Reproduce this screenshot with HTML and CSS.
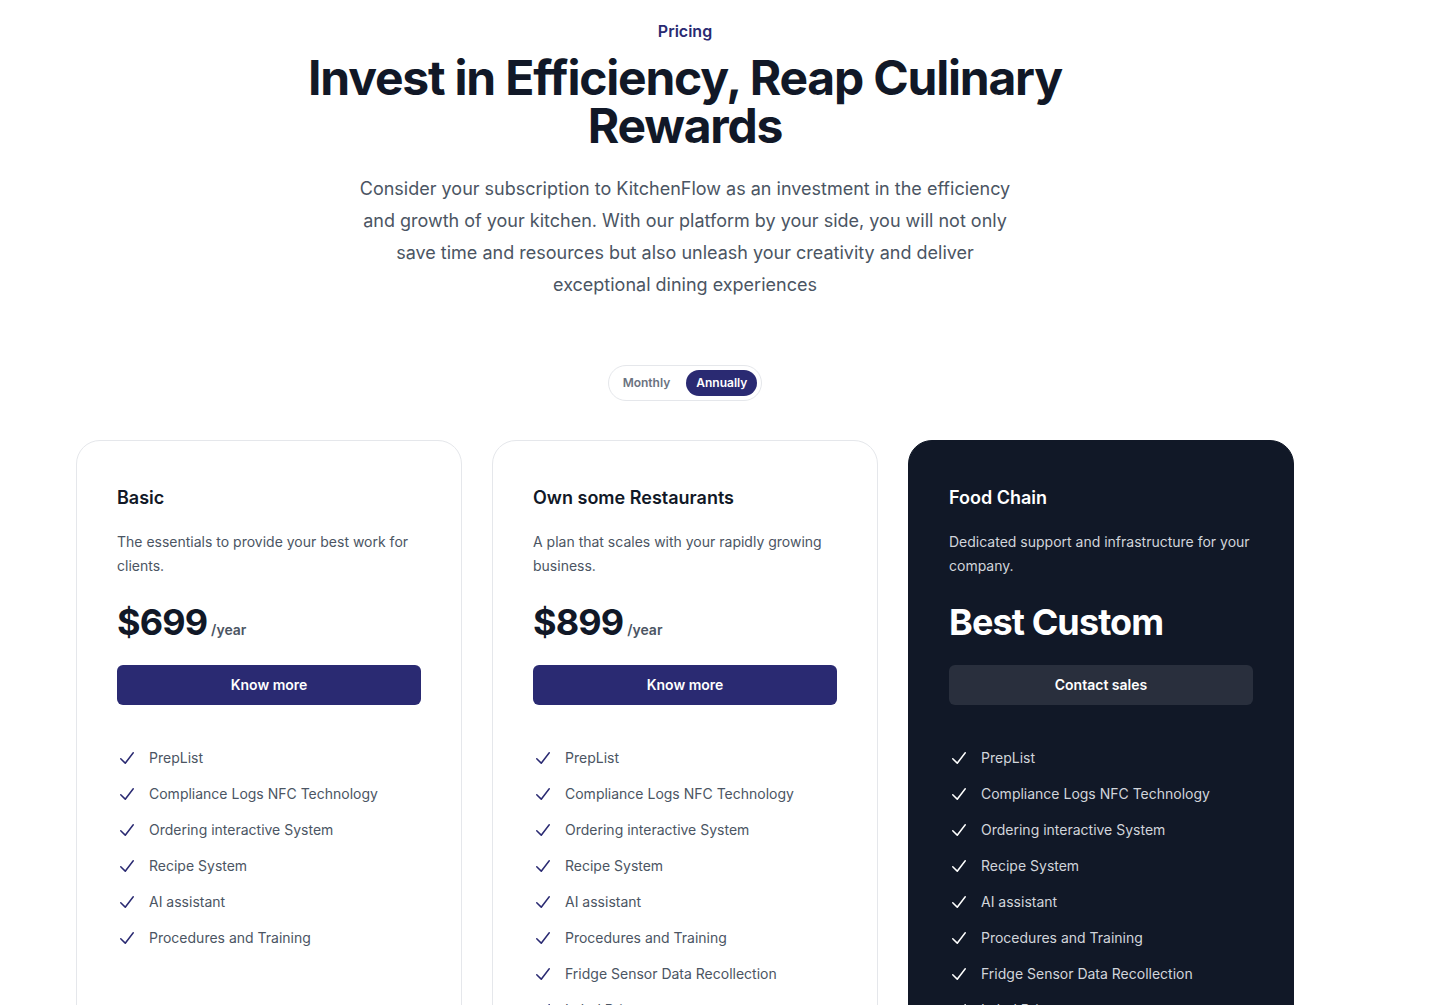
FILE: index.html
```html
<!DOCTYPE html>
<html lang="en">
<head>
<meta charset="utf-8">
<title>Pricing</title>
<link rel="stylesheet" href="styles.css">
</head>
<body>
<main class="page">
  <header class="intro">
    <p class="eyebrow">Pricing</p>
    <h1 class="title">Invest in Efficiency, Reap Culinary Rewards</h1>
    <p class="lead">Consider your subscription to KitchenFlow as an investment in the efficiency and growth of your kitchen. With our platform by your side, you will not only save time and resources but also unleash your creativity and deliver exceptional dining experiences</p>
  </header>

  <div class="toggle-wrap">
    <div class="toggle">
      <span class="toggle-opt">Monthly</span>
      <span class="toggle-opt active">Annually</span>
    </div>
  </div>

  <section class="cards">
    <article class="card">
      <h3 class="card-title">Basic</h3>
      <p class="card-desc">The essentials to provide your best work for clients.</p>
      <p class="price"><span class="amount">$699</span><span class="per">/year</span></p>
      <a class="btn" href="#">Know more</a>
      <ul class="features">
        <li><svg class="check" viewBox="0 0 20 20" aria-hidden="true"><path fill-rule="evenodd" d="M16.704 4.153a.75.75 0 01.143 1.052l-8 10.5a.75.75 0 01-1.127.075l-4.5-4.5a.75.75 0 011.06-1.06l3.894 3.893 7.48-9.817a.75.75 0 011.05-.143z" clip-rule="evenodd"/></svg>PrepList</li>
        <li><svg class="check" viewBox="0 0 20 20" aria-hidden="true"><path fill-rule="evenodd" d="M16.704 4.153a.75.75 0 01.143 1.052l-8 10.5a.75.75 0 01-1.127.075l-4.5-4.5a.75.75 0 011.06-1.06l3.894 3.893 7.48-9.817a.75.75 0 011.05-.143z" clip-rule="evenodd"/></svg>Compliance Logs NFC Technology</li>
        <li><svg class="check" viewBox="0 0 20 20" aria-hidden="true"><path fill-rule="evenodd" d="M16.704 4.153a.75.75 0 01.143 1.052l-8 10.5a.75.75 0 01-1.127.075l-4.5-4.5a.75.75 0 011.06-1.06l3.894 3.893 7.48-9.817a.75.75 0 011.05-.143z" clip-rule="evenodd"/></svg>Ordering interactive System</li>
        <li><svg class="check" viewBox="0 0 20 20" aria-hidden="true"><path fill-rule="evenodd" d="M16.704 4.153a.75.75 0 01.143 1.052l-8 10.5a.75.75 0 01-1.127.075l-4.5-4.5a.75.75 0 011.06-1.06l3.894 3.893 7.48-9.817a.75.75 0 011.05-.143z" clip-rule="evenodd"/></svg>Recipe System</li>
        <li><svg class="check" viewBox="0 0 20 20" aria-hidden="true"><path fill-rule="evenodd" d="M16.704 4.153a.75.75 0 01.143 1.052l-8 10.5a.75.75 0 01-1.127.075l-4.5-4.5a.75.75 0 011.06-1.06l3.894 3.893 7.48-9.817a.75.75 0 011.05-.143z" clip-rule="evenodd"/></svg>AI assistant</li>
        <li><svg class="check" viewBox="0 0 20 20" aria-hidden="true"><path fill-rule="evenodd" d="M16.704 4.153a.75.75 0 01.143 1.052l-8 10.5a.75.75 0 01-1.127.075l-4.5-4.5a.75.75 0 011.06-1.06l3.894 3.893 7.48-9.817a.75.75 0 011.05-.143z" clip-rule="evenodd"/></svg>Procedures and Training</li>
      </ul>
    </article>

    <article class="card">
      <h3 class="card-title">Own some Restaurants</h3>
      <p class="card-desc">A plan that scales with your rapidly growing business.</p>
      <p class="price"><span class="amount">$899</span><span class="per">/year</span></p>
      <a class="btn" href="#">Know more</a>
      <ul class="features">
        <li><svg class="check" viewBox="0 0 20 20" aria-hidden="true"><path fill-rule="evenodd" d="M16.704 4.153a.75.75 0 01.143 1.052l-8 10.5a.75.75 0 01-1.127.075l-4.5-4.5a.75.75 0 011.06-1.06l3.894 3.893 7.48-9.817a.75.75 0 011.05-.143z" clip-rule="evenodd"/></svg>PrepList</li>
        <li><svg class="check" viewBox="0 0 20 20" aria-hidden="true"><path fill-rule="evenodd" d="M16.704 4.153a.75.75 0 01.143 1.052l-8 10.5a.75.75 0 01-1.127.075l-4.5-4.5a.75.75 0 011.06-1.06l3.894 3.893 7.48-9.817a.75.75 0 011.05-.143z" clip-rule="evenodd"/></svg>Compliance Logs NFC Technology</li>
        <li><svg class="check" viewBox="0 0 20 20" aria-hidden="true"><path fill-rule="evenodd" d="M16.704 4.153a.75.75 0 01.143 1.052l-8 10.5a.75.75 0 01-1.127.075l-4.5-4.5a.75.75 0 011.06-1.06l3.894 3.893 7.48-9.817a.75.75 0 011.05-.143z" clip-rule="evenodd"/></svg>Ordering interactive System</li>
        <li><svg class="check" viewBox="0 0 20 20" aria-hidden="true"><path fill-rule="evenodd" d="M16.704 4.153a.75.75 0 01.143 1.052l-8 10.5a.75.75 0 01-1.127.075l-4.5-4.5a.75.75 0 011.06-1.06l3.894 3.893 7.48-9.817a.75.75 0 011.05-.143z" clip-rule="evenodd"/></svg>Recipe System</li>
        <li><svg class="check" viewBox="0 0 20 20" aria-hidden="true"><path fill-rule="evenodd" d="M16.704 4.153a.75.75 0 01.143 1.052l-8 10.5a.75.75 0 01-1.127.075l-4.5-4.5a.75.75 0 011.06-1.06l3.894 3.893 7.48-9.817a.75.75 0 011.05-.143z" clip-rule="evenodd"/></svg>AI assistant</li>
        <li><svg class="check" viewBox="0 0 20 20" aria-hidden="true"><path fill-rule="evenodd" d="M16.704 4.153a.75.75 0 01.143 1.052l-8 10.5a.75.75 0 01-1.127.075l-4.5-4.5a.75.75 0 011.06-1.06l3.894 3.893 7.48-9.817a.75.75 0 011.05-.143z" clip-rule="evenodd"/></svg>Procedures and Training</li>
        <li><svg class="check" viewBox="0 0 20 20" aria-hidden="true"><path fill-rule="evenodd" d="M16.704 4.153a.75.75 0 01.143 1.052l-8 10.5a.75.75 0 01-1.127.075l-4.5-4.5a.75.75 0 011.06-1.06l3.894 3.893 7.48-9.817a.75.75 0 011.05-.143z" clip-rule="evenodd"/></svg>Fridge Sensor Data Recollection</li>
        <li><svg class="check" viewBox="0 0 20 20" aria-hidden="true"><path fill-rule="evenodd" d="M16.704 4.153a.75.75 0 01.143 1.052l-8 10.5a.75.75 0 01-1.127.075l-4.5-4.5a.75.75 0 011.06-1.06l3.894 3.893 7.48-9.817a.75.75 0 011.05-.143z" clip-rule="evenodd"/></svg>Label Printer</li>
      </ul>
    </article>

    <article class="card dark">
      <h3 class="card-title">Food Chain</h3>
      <p class="card-desc">Dedicated support and infrastructure for your company.</p>
      <p class="price"><span class="amount">Best Custom</span></p>
      <a class="btn" href="#">Contact sales</a>
      <ul class="features">
        <li><svg class="check" viewBox="0 0 20 20" aria-hidden="true"><path fill-rule="evenodd" d="M16.704 4.153a.75.75 0 01.143 1.052l-8 10.5a.75.75 0 01-1.127.075l-4.5-4.5a.75.75 0 011.06-1.06l3.894 3.893 7.48-9.817a.75.75 0 011.05-.143z" clip-rule="evenodd"/></svg>PrepList</li>
        <li><svg class="check" viewBox="0 0 20 20" aria-hidden="true"><path fill-rule="evenodd" d="M16.704 4.153a.75.75 0 01.143 1.052l-8 10.5a.75.75 0 01-1.127.075l-4.5-4.5a.75.75 0 011.06-1.06l3.894 3.893 7.48-9.817a.75.75 0 011.05-.143z" clip-rule="evenodd"/></svg>Compliance Logs NFC Technology</li>
        <li><svg class="check" viewBox="0 0 20 20" aria-hidden="true"><path fill-rule="evenodd" d="M16.704 4.153a.75.75 0 01.143 1.052l-8 10.5a.75.75 0 01-1.127.075l-4.5-4.5a.75.75 0 011.06-1.06l3.894 3.893 7.48-9.817a.75.75 0 011.05-.143z" clip-rule="evenodd"/></svg>Ordering interactive System</li>
        <li><svg class="check" viewBox="0 0 20 20" aria-hidden="true"><path fill-rule="evenodd" d="M16.704 4.153a.75.75 0 01.143 1.052l-8 10.5a.75.75 0 01-1.127.075l-4.5-4.5a.75.75 0 011.06-1.06l3.894 3.893 7.48-9.817a.75.75 0 011.05-.143z" clip-rule="evenodd"/></svg>Recipe System</li>
        <li><svg class="check" viewBox="0 0 20 20" aria-hidden="true"><path fill-rule="evenodd" d="M16.704 4.153a.75.75 0 01.143 1.052l-8 10.5a.75.75 0 01-1.127.075l-4.5-4.5a.75.75 0 011.06-1.06l3.894 3.893 7.48-9.817a.75.75 0 011.05-.143z" clip-rule="evenodd"/></svg>AI assistant</li>
        <li><svg class="check" viewBox="0 0 20 20" aria-hidden="true"><path fill-rule="evenodd" d="M16.704 4.153a.75.75 0 01.143 1.052l-8 10.5a.75.75 0 01-1.127.075l-4.5-4.5a.75.75 0 011.06-1.06l3.894 3.893 7.48-9.817a.75.75 0 011.05-.143z" clip-rule="evenodd"/></svg>Procedures and Training</li>
        <li><svg class="check" viewBox="0 0 20 20" aria-hidden="true"><path fill-rule="evenodd" d="M16.704 4.153a.75.75 0 01.143 1.052l-8 10.5a.75.75 0 01-1.127.075l-4.5-4.5a.75.75 0 011.06-1.06l3.894 3.893 7.48-9.817a.75.75 0 011.05-.143z" clip-rule="evenodd"/></svg>Fridge Sensor Data Recollection</li>
        <li><svg class="check" viewBox="0 0 20 20" aria-hidden="true"><path fill-rule="evenodd" d="M16.704 4.153a.75.75 0 01.143 1.052l-8 10.5a.75.75 0 01-1.127.075l-4.5-4.5a.75.75 0 011.06-1.06l3.894 3.893 7.48-9.817a.75.75 0 011.05-.143z" clip-rule="evenodd"/></svg>Label Printer</li>
      </ul>
    </article>
  </section>
</main>
</body>
</html>
```

FILE: styles.css
```css
* { box-sizing: border-box; }

html, body {
  margin: 0;
  padding: 0;
  background: #ffffff;
}

body {
  font-family: Inter, "Noto Sans", "Liberation Sans", sans-serif;
  color: #111827;
  -webkit-font-smoothing: antialiased;
}

.page {
  width: 1370px;
  padding: 17px 0 80px;
}

.intro {
  display: flex;
  flex-direction: column;
  align-items: center;
  text-align: center;
}

.eyebrow {
  margin: 0;
  font-size: 16px;
  line-height: 28px;
  font-weight: 600;
  color: #2a2a72;
}

.title {
  margin: 9px 0 0;
  max-width: 896px;
  font-size: 48px;
  line-height: 48px;
  font-weight: 700;
  letter-spacing: -0.025em;
  color: #111827;
}

.lead {
  margin: 23px 0 0;
  max-width: 672px;
  font-size: 18px;
  line-height: 32px;
  color: #4b5563;
}

.toggle-wrap {
  margin-top: 64px;
  display: flex;
  justify-content: center;
}

.toggle {
  display: flex;
  gap: 6px;
  padding: 4px;
  border: 1px solid #e5e7eb;
  border-radius: 9999px;
}

.toggle-opt {
  padding: 4px 10px;
  font-size: 12px;
  line-height: 18px;
  font-weight: 600;
  color: #6b7280;
  border-radius: 9999px;
}

.toggle-opt.active {
  background: #2a2a72;
  color: #ffffff;
}

.cards {
  margin: 39px auto 0;
  width: 1218px;
  display: grid;
  grid-template-columns: repeat(3, 386px);
  column-gap: 30px;
}

.card {
  border: 1px solid #e5e7eb;
  border-radius: 24px;
  padding: 41px 40px 40px;
  background: #ffffff;
}

.card.dark {
  background: #111827;
  border-color: #111827;
}

.card-title {
  margin: 0;
  font-size: 18px;
  line-height: 32px;
  font-weight: 600;
  color: #111827;
}

.card-desc {
  margin: 16px 0 0;
  font-size: 14px;
  line-height: 24px;
  color: #4b5563;
}

.price {
  margin: 24px 0 0;
  display: flex;
  align-items: baseline;
  gap: 4px;
}

.amount {
  font-size: 36px;
  line-height: 40px;
  font-weight: 700;
  letter-spacing: -0.025em;
  color: #111827;
}

.per {
  font-size: 14px;
  line-height: 24px;
  font-weight: 600;
  color: #4b5563;
}

.btn {
  display: block;
  margin-top: 23px;
  padding: 8px 12px;
  border-radius: 6px;
  background: #2a2a72;
  color: #ffffff;
  text-align: center;
  text-decoration: none;
  font-size: 14px;
  line-height: 24px;
  font-weight: 600;
}

.features {
  list-style: none;
  margin: 41px 0 0;
  padding: 0;
  display: flex;
  flex-direction: column;
  gap: 12px;
  font-size: 14px;
  line-height: 24px;
  color: #4b5563;
}

.features li {
  display: flex;
  gap: 12px;
}

.check {
  flex: none;
  width: 20px;
  height: 24px;
  fill: #2a2a72;
}

.dark .card-title,
.dark .amount {
  color: #ffffff;
}

.dark .card-desc,
.dark .features {
  color: #d1d5db;
}

.dark .btn {
  background: rgba(255, 255, 255, 0.1);
}

.dark .check {
  fill: #ffffff;
}
```
